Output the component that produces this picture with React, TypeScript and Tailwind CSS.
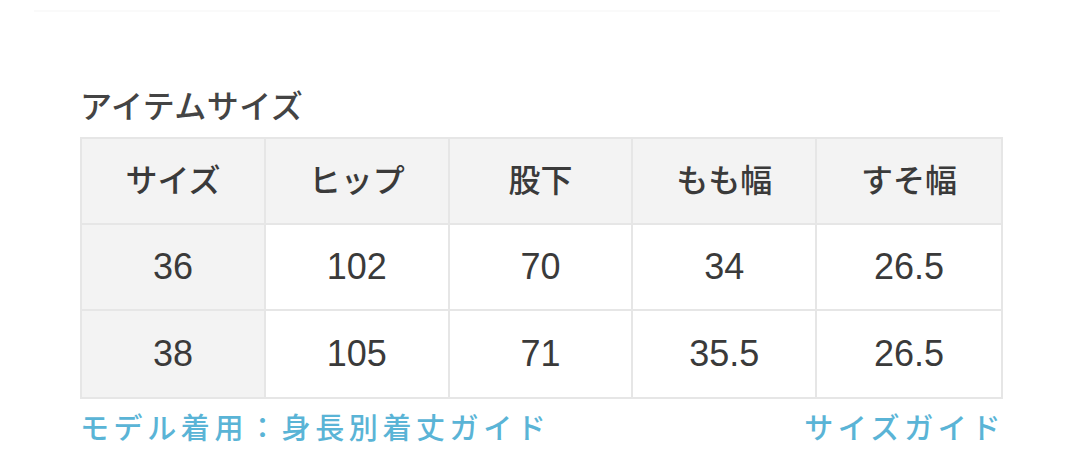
import React from 'react';

const headers = ['サイズ', 'ヒップ', '股下', 'もも幅', 'すそ幅'];
const rows = [
  ['36', '102', '70', '34', '26.5'],
  ['38', '105', '71', '35.5', '26.5'],
];

export default function App() {
  return (
    <div
      className="w-[1080px] h-[474px] bg-white overflow-hidden"
      style={{ fontFamily: '"Liberation Sans", "Noto Sans CJK JP", sans-serif' }}
    >
      {/* faint divider from the section above */}
      <div className="pt-[10px] pl-[34px]">
        <div className="w-[966px] h-[2px] bg-[#fafafa]" />
      </div>

      <div className="pl-[80px] pt-[78px] w-[1003px]">
        <h2 className="text-[32px] leading-[34px] text-[#444] font-medium tracking-[0.5px]">アイテムサイズ</h2>

        <div className="mt-[13px] border-2 border-[#e6e6e6]">
          <div className="grid grid-cols-5 h-[86px] bg-[#f3f3f3] border-b-2 border-[#e6e6e6]">
            {headers.map((h, i) => (
              <div
                key={h}
                className={`flex items-center justify-center text-[32px] font-medium text-[#3a3a3a] ${i < 4 ? 'border-r-2 border-[#e6e6e6]' : ''}`}
              >
                {h}
              </div>
            ))}
          </div>
          {rows.map((r, ri) => (
            <div
              key={ri}
              className={`grid grid-cols-5 h-[86px] ${ri === 0 ? 'border-b-2 border-[#e6e6e6]' : ''}`}
            >
              {r.map((v, i) => (
                <div
                  key={i}
                  className={`flex items-center justify-center text-[36px] text-[#3a3a3a] ${i === 0 ? 'bg-[#f3f3f3]' : 'bg-white'} ${i < 4 ? 'border-r-2 border-[#e6e6e6]' : ''}`}
                >
                  {v}
                </div>
              ))}
            </div>
          ))}
        </div>

        <div className="flex justify-between mt-[14px] text-[29px] leading-[32px] font-medium text-[#5ab4d6] tracking-[4.6px]">
          <span>モデル着用：身長別着丈ガイド</span>
          <span className="-mr-[2px]">サイズガイド</span>
        </div>
      </div>
    </div>
  );
}
